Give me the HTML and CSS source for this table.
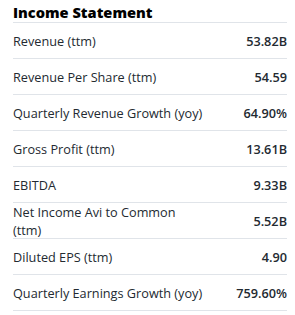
FILE: index.html
```html
<!DOCTYPE html>
<html>
<head>
<meta charset="utf-8">
<link rel="stylesheet" href="styles.css">
</head>
<body>
<section class="card">
  <h3 class="title">Income Statement</h3>
  <div class="row"><span class="label">Revenue (ttm)</span><span class="value">53.82B</span></div>
  <div class="row"><span class="label">Revenue Per Share (ttm)</span><span class="value">54.59</span></div>
  <div class="row"><span class="label">Quarterly Revenue Growth (yoy)</span><span class="value">64.90%</span></div>
  <div class="row"><span class="label">Gross Profit (ttm)</span><span class="value">13.61B</span></div>
  <div class="row"><span class="label">EBITDA</span><span class="value">9.33B</span></div>
  <div class="row"><span class="label narrow">Net Income Avi to Common (ttm)</span><span class="value">5.52B</span></div>
  <div class="row"><span class="label">Diluted EPS (ttm)</span><span class="value">4.90</span></div>
  <div class="row"><span class="label">Quarterly Earnings Growth (yoy)</span><span class="value">759.60%</span></div>
</section>
</body>
</html>
```

FILE: styles.css
```css
html, body {
  margin: 0;
  padding: 0;
  background: #ffffff;
}
body {
  font-family: "Open Sans", "Liberation Sans", sans-serif;
  color: #232a31;
}
.card {
  width: 274px;
  margin-left: 13px;
}
.title {
  margin: 0;
  height: 21px;
  padding-top: 1px;
  font-size: 14.6px;
  font-weight: 800;
  line-height: 22px;
  border-bottom: 1px solid #e0e4e9;
  color: #000;
}
.row {
  display: flex;
  align-items: center;
  justify-content: space-between;
  height: 35px;
  border-bottom: 1px solid #e0e4e9;
  font-size: 12.7px;
  line-height: 18px;
}
.label.narrow {
  max-width: 180px;
}
.value {
  font-weight: 600;
}
```
